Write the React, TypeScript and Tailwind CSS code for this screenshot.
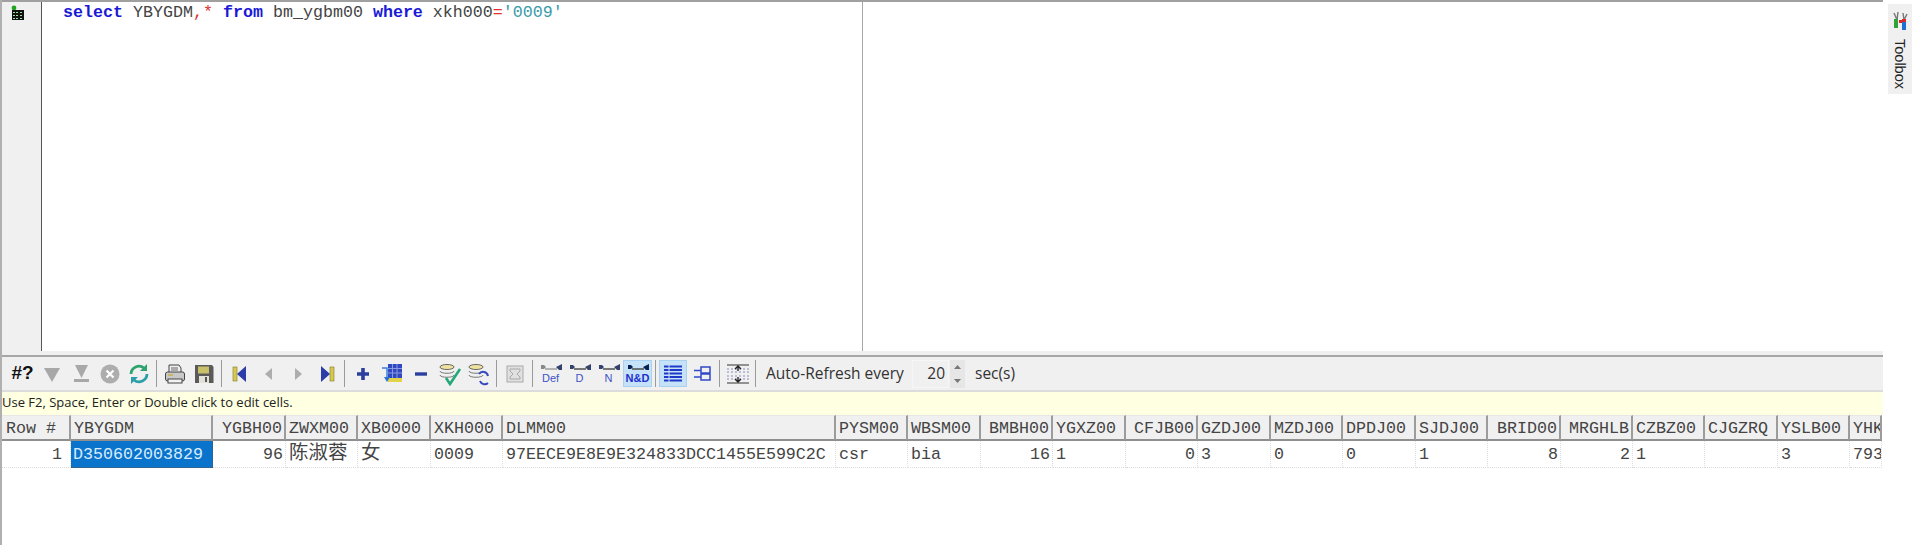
import React from "react";

const S = ({ children, w = 29 }: { children: React.ReactNode; w?: number }) => (
  <svg width={w === 29 ? 24 : w} height="24" viewBox="0 0 24 24" className="shrink-0">{children}</svg>
);
const Slot = ({ children }: { children: React.ReactNode }) => (
  <div className="flex h-[30px] w-[29px] shrink-0 items-center justify-center">{children}</div>
);
const Sep = () => <div className="mx-[3px] h-[27px] w-px shrink-0 bg-[#9a9a9a]" />;

const Link = ({ label, sel, dark }: { label: string; sel?: boolean; dark?: boolean }) => (
  <div className={"flex h-[27px] w-[29px] shrink-0 flex-col items-center justify-center " + (sel ? "border border-[#a8d2f0] bg-[#c6e2f8]" : "")}>
    <svg width="24" height="9" viewBox="0 0 24 9" className="shrink-0">
      <path d="M2 2h3l2 2-2 2H2z" fill={label === "Def" ? "#888" : dark ? "#0a2050" : "#33436e"} />
      <path d="M6 6h12" stroke={label === "Def" ? "#999" : "#444"} strokeWidth="1.4" />
      <path d="M23 1v6h-3l-3-3z" fill={dark ? "#0a2050" : "#33436e"} />
    </svg>
    <span className={"font-['Liberation_Sans',sans-serif] text-[11px] leading-[12px] " + (dark ? "font-bold text-[#1d2fd0]" : "text-[#3f52c8]")}>{label}</span>
  </div>
);

const heads: [string, boolean?][] = [
  ["Row #"], ["YBYGDM"], ["YGBH00", true], ["ZWXM00"], ["XB0000"], ["XKH000"], ["DLMM00"], ["PYSM00"], ["WBSM00"],
  ["BMBH00", true], ["YGXZ00"], ["CFJB00", true], ["GZDJ00"], ["MZDJ00"], ["DPDJ00"], ["SJDJ00"], ["BRID00", true],
  ["MRGHLB", true], ["CZBZ00"], ["CJGZRQ"], ["YSLB00"], ["YHK"],
];
const cells: [string, boolean?][] = [
  ["1", true], ["D350602003829"], ["96", true], ["陈淑蓉"], ["女"], ["0009"], ["97EECE9E8E9E324833DCC1455E599C2C"], ["csr"], ["bia"],
  ["16", true], ["1"], ["0", true], ["3"], ["0"], ["0"], ["1"], ["8", true], ["2", true], ["1"], [""], ["3"], ["793"],
];

export default function App() {
  return (
    <div className="flex h-[545px] w-[1912px] overflow-hidden bg-white font-['Liberation_Mono','Noto_Sans_CJK_SC',monospace] text-[16.67px] text-[#444]">
      <div className="flex w-[1883px] shrink-0 flex-col border-l-2 border-[#b0b0b0]">
        {/* Editor */}
        <div className="flex h-[351px] shrink-0 border-t-2 border-[#a0a0a0]">
          <div className="flex w-[40px] shrink-0 justify-center border-r border-[#555] bg-[#f0f0f0] pr-[7px] pt-[3px]">
            <svg width="14" height="16" viewBox="0 0 14 16">
              <circle cx="3" cy="3" r="2.4" fill="#1fa51f" />
              <rect x="1" y="5" width="12" height="10" fill="#111" />
              <path d="M2 7h2v1H2zM5 7h2v1H5zM9 7h2v1H9zM2 10h2v1H2zM5 10h2v1H5zM9 10h2v1H9zM2 13h2v1H2zM5 13h2v1H5zM9 13h2v1H9z" fill="#9be59b" />
            </svg>
          </div>
          <div className="w-[821px] shrink-0 border-r border-[#a8a8a8] pl-[21px] pt-[1px] leading-[20px] whitespace-pre">
            <span className="font-bold text-[#1a1ad6]">select</span>{" YBYGDM"}<span className="text-[#e03030]">,*</span>{" "}
            <span className="font-bold text-[#1a1ad6]">from</span>{" bm_ygbm00 "}
            <span className="font-bold text-[#1a1ad6]">where</span>{" xkh000"}<span className="text-[#e03030]">=</span>
            <span className="text-[#3a9aa8]">'0009'</span>
          </div>
          <div className="flex-1" />
        </div>
        <div className="h-[4px] shrink-0 bg-[#f0f0f0]" />
        {/* Toolbar */}
        <div className="flex h-[37px] shrink-0 items-center border-y-2 border-t-[#a6a6a6] border-b-[#dcdcdc] bg-[#f0f0f0] pl-[6px] font-['Open_Sans',sans-serif] text-[15.5px] text-[#333]">
          <Slot><span className="font-['Liberation_Sans',sans-serif] text-[19px] font-bold text-[#111]">#?</span></Slot>
          <Slot><S><path d="M4 6h16l-8 14z" fill="#a8a8a8" /></S></Slot>
          <Slot><S><path d="M6 3h13l-6.500 13z" fill="#a8a8a8" /><rect x="5" y="17" width="15" height="3" fill="#a8a8a8" /></S></Slot>
          <Slot><S><circle cx="12" cy="12" r="9.500" fill="#adadad" /><path d="M8.500 8.500l7 7m0-7l-7 7" stroke="#fff" strokeWidth="2.200" /></S></Slot>
          <Slot><S><path d="M4 12a8 8 0 0 1 13-6" fill="none" stroke="#2ea36d" strokeWidth="2.800" /><path d="M20 2v7h-7z" fill="#2ea36d" /><path d="M20 12a8 8 0 0 1-13 6" fill="none" stroke="#2b9fa8" strokeWidth="2.800" /><path d="M4 22v-7h7z" fill="#2b9fa8" /></S></Slot>
          <Sep />
          <Slot><S><path d="M7 3h9l2 3v5H6V3z" fill="#eee" stroke="#444" /><path d="M8 6h7M8 8h7" stroke="#666" /><rect x="2.500" y="10" width="19" height="9" rx="2" fill="#c8c8c8" stroke="#444" /><rect x="5" y="17" width="14" height="4" fill="#f2f2f2" stroke="#444" /><path d="M5 13h5" stroke="#c9b24a" strokeWidth="1.500" /></S></Slot>
          <Slot><S><path d="M3 3h17l1.500 2v16H3z" fill="#5a5a5a" /><rect x="6" y="4.500" width="11" height="7" fill="#c9c06a" /><rect x="7" y="14" width="10" height="7" fill="#e2e2d8" /><rect x="13" y="15" width="2" height="5" fill="#555" /></S></Slot>
          <Sep />
          <Slot><S><rect x="5" y="5" width="4" height="14" fill="#d7c94f" stroke="#807a2c" strokeWidth=".6" /><path d="M18 4v16L9 12z" fill="#2c3ca8" /></S></Slot>
          <Slot><S><path d="M15 6v12l-7-6z" fill="#adadad" /></S></Slot>
          <Slot><S><path d="M9 6v12l7-6z" fill="#adadad" /></S></Slot>
          <Slot><S><path d="M6 4v16l9-8z" fill="#2c3ca8" /><rect x="15" y="5" width="4" height="14" fill="#d7c94f" stroke="#807a2c" strokeWidth=".6" /></S></Slot>
          <Sep />
          <Slot><S><path d="M12 6v12M6 12h12" stroke="#2b3f9e" strokeWidth="3.600" /></S></Slot>
          <Slot><S><rect x="8" y="2" width="14" height="14" fill="#3148c0" /><path d="M8 6.500h14M8 11h14M12.500 2v14M17 2v14" stroke="#8a9ae0" /><rect x="8" y="16" width="14" height="4" fill="#e3d34a" /><path d="M2 6h5v11" fill="none" stroke="#3a7fe0" strokeWidth="1.500" /><path d="M4 15h6l-3 5z" fill="#2a70d8" /></S></Slot>
          <Slot><S><path d="M6 12h12" stroke="#2b3f9e" strokeWidth="3.400" /></S></Slot>
          <Slot><S><ellipse cx="9" cy="5" rx="7" ry="2.500" fill="#eee2a0" stroke="#666" /><path d="M2 9c0 3 14 3 14 0M2 13c0 3 14 3 14 0" fill="none" stroke="#777" /><path d="M8 16l4 6 10-15" fill="none" stroke="#24a878" strokeWidth="2.600" /></S></Slot>
          <Slot><S><ellipse cx="9" cy="5" rx="7" ry="2.500" fill="#eee2a0" stroke="#666" /><path d="M2 9c0 3 14 3 14 0M2 13c0 3 14 3 14 0" fill="none" stroke="#777" /><path d="M12 12a5 5 0 0 1 9 2" fill="none" stroke="#3548c0" strokeWidth="2" /><path d="M21 21a5 5 0 0 1-8-2" fill="none" stroke="#3548c0" strokeWidth="2" /></S></Slot>
          <Sep />
          <Slot><S><rect x="4" y="4" width="16" height="16" fill="#e0e0e0" stroke="#aaa" /><path d="M7 7h10v2l-3 3 3 3v2H7v-2l3-3-3-3z" fill="none" stroke="#a8a8a8" /></S></Slot>
          <Sep />
          <Link label="Def" />
          <Link label="D" />
          <Link label="N" />
          <Link label="N&D" sel dark />
          <Sep />
          <div className="flex h-[27px] w-[28px] shrink-0 items-center justify-center border border-[#a8d2f0] bg-[#c6e2f8]">
            <svg width="20" height="20" viewBox="0 0 20 20"><path d="M1 2.500h18M1 6h18M1 9.500h18M1 13h18M1 16.500h18" stroke="#2038c8" strokeWidth="2" /><path d="M6 1v17" stroke="#c6e2f8" /></svg>
          </div>
          <Slot><S><path d="M4 8.500h7M4 15h7M11 5h9v6h-9zM11 12h9v6h-9zM11 5v13" fill="none" stroke="#3148c8" strokeWidth="1.500" /></S></Slot>
          <Sep />
          <Slot><S><path d="M1 3h22M1 21h22" stroke="#333" strokeWidth="1.200" /><path d="M1 7h22M1 10h22M1 14h22M1 17h22" stroke="#8a8ac0" strokeDasharray="2 2" /><path d="M12 4v5M9 7l3-3 3 3M12 20v-5M9 17l3 3 3-3" fill="none" stroke="#222" strokeWidth="1.400" /></S></Slot>
          <Sep />
          <span className="ml-[7px] w-[146px] shrink-0 whitespace-nowrap">Auto-Refresh every</span>
          <div className="flex h-[28px] w-[37px] shrink-0 items-center justify-end border border-[#f6f6f6] bg-[#f0f0f0] pr-[3px] text-[15.5px]">20</div>
          <div className="ml-px flex h-[28px] w-[15px] shrink-0 flex-col items-center justify-around bg-[#e6e6e6]">
            <svg width="9" height="6" viewBox="0 0 9 6"><path d="M1 5l3.500-4L8 5z" fill="#777" /></svg>
            <svg width="9" height="6" viewBox="0 0 9 6"><path d="M1 1l3.500 4L8 1z" fill="#777" /></svg>
          </div>
          <span className="ml-[10px] shrink-0">sec(s)</span>
        </div>
        {/* Hint */}
        <div className="h-[23px] shrink-0 whitespace-nowrap bg-[#ffffe1] font-['Open_Sans',sans-serif] text-[13px] leading-[21px] text-[#222]">
          Use F2, Space, Enter or Double click to edit cells.
        </div>
        {/* Grid */}
        <div className="grid grid-cols-[69px_142px_73px_72px_73px_72px_333px_72px_73px_72px_73px_72px_73px_72px_73px_72px_73px_72px_72px_73px_72px_32px] grid-rows-[26px_27px] overflow-hidden">
          {heads.map(([t, right], i) => (
            <div
              key={i}
              className={
                "overflow-hidden whitespace-nowrap border-b-2 border-r-2 border-t border-b-[#8f8f8f] border-r-[#9c9c9c] border-t-[#e6e6e6] bg-[#f0f0f0] leading-[26px] " +
                (i === 21 ? "border-r-0 pl-[3px]" : right ? "pr-[2px] text-right" : i === 0 ? "pl-[4px]" : "pl-[3px]")
              }
            >
              {t}
            </div>
          ))}
          {cells.map(([t, right], i) => (
            <div
              key={i}
              className={
                "overflow-hidden whitespace-nowrap border-b border-r border-dotted leading-[27px] " +
                (i === 1
                  ? "border-[#555] bg-[#0a74cc] pl-[2px] text-[#d8ecff]"
                  : "border-[#dcdcdc] " + (i === 3 || i === 4 ? "pl-[3px] text-[19.5px] " : "") + (i === 0 ? "pr-[8px] text-right" : right ? "pr-[2px] text-right" : "pl-[3px]"))
              }
            >
              {t}
            </div>
          ))}
        </div>
      </div>
      {/* Toolbox */}
      <div className="flex flex-1 flex-col items-end pt-[4px]">
        <div className="flex h-[90px] w-[24px] flex-col items-center bg-[#f0f0f0] pt-[8px]">
          <svg width="16" height="19" viewBox="0 0 16 19" className="shrink-0">
            <path d="M2 1l3 7M6 0l-1 8M11 1l1 7M15 2l-3 6" stroke="#777" strokeWidth="1.400" fill="none" />
            <rect x="2" y="7" width="4" height="9" fill="#2fa33a" />
            <rect x="7" y="8" width="3" height="3" fill="#d92828" />
            <rect x="10" y="9" width="4" height="9" fill="#1f6fd0" />
            <rect x="10" y="7" width="4" height="3" fill="#d92828" />
          </svg>
          <span className="mt-[8px] font-['Liberation_Sans',sans-serif] text-[14.5px] leading-[16px] text-[#222] [writing-mode:vertical-rl]">Toolbox</span>
        </div>
      </div>
    </div>
  );
}
